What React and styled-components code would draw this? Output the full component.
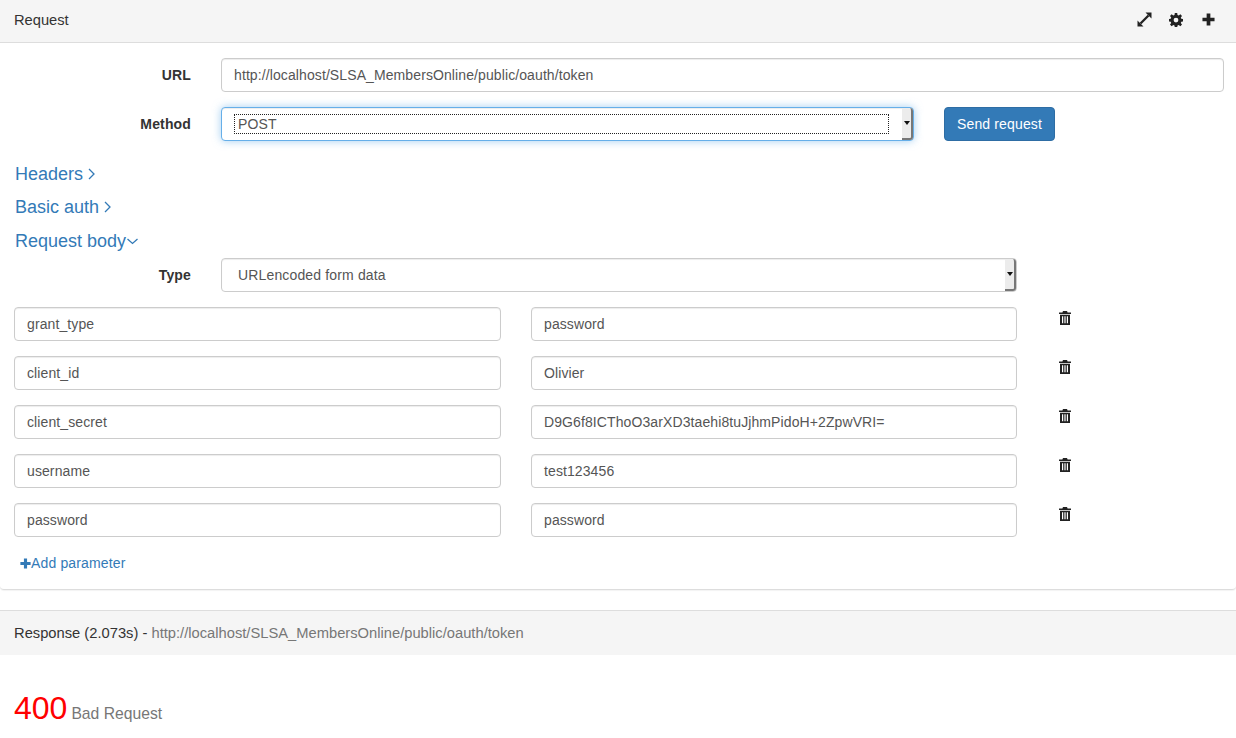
import React from 'react';
import styled, { createGlobalStyle } from 'styled-components';

const Global = createGlobalStyle`
  html, body { margin: 0; padding: 0; background: #fff; }
  body { font-family: "Liberation Sans", Arial, sans-serif; font-size: 14px; line-height: 20px; color: #333; }
  * { box-sizing: border-box; }
`;

const Page = styled.div`
  width: 1236px;
  height: 738px;
  overflow: hidden;
`;
const PanelHeader = styled.header`
  height: 43px;
  background: #f5f5f5;
  border-bottom: 1px solid #ddd;
  display: flex;
  align-items: center;
  justify-content: space-between;
  padding: 0 21px 2px 14px;
  color: #333;
  font-size: 14.7px;
`;
const Tools = styled.div`
  display: flex;
  align-items: center;
  gap: 17px;
  margin-bottom: 1px;
  color: #222;
`;
const Icon = styled.svg`
  display: block;
  width: ${p => p.$size || 14}px;
  height: ${p => p.$size || 14}px;
  margin-left: ${p => p.$ml || 0}px;
  fill: currentColor;
`;
const RequestPanel = styled.section`
  height: 547px;
  padding: 15px 12px 0 14px;
  border-bottom: 1px solid #ddd;
  border-radius: 0 0 4px 4px;
  box-shadow: 0 1px 1px rgba(0,0,0,.05);
`;
const FormRow = styled.div`
  display: flex;
  align-items: center;
  height: 34px;
  margin-bottom: ${p => p.$mb || 15}px;
`;
const Label = styled.label`
  width: 177px;
  margin-right: 30px;
  text-align: right;
  font-weight: 700;
  letter-spacing: .15px;
  color: #333;
`;
const Field = styled.div`
  flex: 1;
  height: 34px;
  padding: 6px 12px;
  border: 1px solid #ccc;
  border-radius: 4px;
  background: #fff;
  color: #555;
  letter-spacing: .1px;
  box-shadow: inset 0 1px 1px rgba(0,0,0,.075);
  white-space: nowrap;
  overflow: hidden;
`;
const SelectBox = styled.div`
  flex: 0 0 ${p => p.$w}px;
  height: 34px;
  display: flex;
  align-items: center;
  justify-content: space-between;
  border: 1px solid ${p => p.$focus ? '#66afe9' : '#ccc'};
  border-radius: 4px;
  background: #fff;
  color: #555;
  padding-left: ${p => p.$focus ? 12 : 16}px;
  letter-spacing: .15px;
  box-shadow: ${p => p.$focus
    ? 'inset 0 1px 1px rgba(0,0,0,.075), 0 0 8px rgba(102,175,233,.6)'
    : 'inset 0 1px 1px rgba(0,0,0,.075)'};
`;
const SelectValue = styled.div`
  flex: 1;
  height: 20px;
  line-height: 20px;
  padding-left: ${p => p.$focus ? 4 : 0}px;
  outline: ${p => p.$focus ? '1px dotted #222' : 'none'};
  outline-offset: -1px;
  margin-right: ${p => p.$focus ? 13 : 0}px;
`;
const SelectArrow = styled.div`
  flex: 0 0 11px;
  height: 32px;
  display: flex;
  align-items: center;
  justify-content: center;
  background: #ececec;
  border-right: 2px solid #777;
  border-bottom: 2px solid #777;
  border-radius: 0 3px 3px 0;
  &::after {
    content: "";
    border-left: 3px solid transparent;
    border-right: 3px solid transparent;
    border-top: 4px solid #111;
  }
`;
const SendButton = styled.button`
  margin-left: 30px;
  height: 34px;
  width: 111px;
  padding: 0;
  font: inherit;
  letter-spacing: .15px;
  color: #fff;
  background: #337ab7;
  border: 1px solid #2e6da4;
  border-radius: 4px;
`;
const SectionLink = styled.a`
  display: flex;
  align-items: center;
  gap: ${p => p.$gap ?? 5}px;
  margin-left: 1px;
  height: 20px;
  margin-bottom: ${p => p.$mb}px;
  font-size: 18px;
  color: #337ab7;
`;
const Params = styled.div`
  display: flex;
  flex-direction: column;
  gap: 15px;
  margin-top: 15px;
`;
const ParamRow = styled.div`
  display: flex;
  align-items: flex-start;
  height: 34px;
`;
const ParamName = styled(Field)`
  flex: 0 0 487px;
  margin-right: 30px;
`;
const ParamValue = styled(Field)`
  flex: 0 0 486px;
  margin-right: 41px;
`;
const TrashButton = styled.span`
  display: block;
  margin-top: 4px;
  color: #222;
`;
const AddParam = styled.a`
  display: flex;
  align-items: center;
  margin: 16px 0 0 6px;
  letter-spacing: .15px;
  color: #337ab7;
`;
const ResponseHeader = styled.header`
  margin-top: 20px;
  height: 45px;
  display: flex;
  align-items: center;
  padding: 0 14px;
  background: #f5f5f5;
  border-top: 1px solid #ddd;
  color: #333;
  font-size: 14.73px;
  white-space: pre;
`;
const Muted = styled.span`
  color: #777;
`;
const Status = styled.div`
  display: flex;
  align-items: baseline;
  padding: 33px 14px 0;
  gap: 4px;
  line-height: 40px;
`;
const StatusCode = styled.span`
  font-size: 32px;
  color: #f00;
`;
const StatusText = styled.span`
  font-size: 15.7px;
  color: #777;
`;

const ResizeIcon = () => (
  <Icon viewBox="0 0 15 15" $size={15}>
    <path d="M8.500 .5h6v6zM.5 8.500v6h6z" />
    <path d="M3.500 11.500 11.500 3.500" stroke="currentColor" strokeWidth="2.300" fill="none" />
  </Icon>
);
const CogIcon = () => (
  <Icon viewBox="0 0 14 14" $size={14}>
    <path fillRule="evenodd" d="M5.800 0h2.400l.3 2 1.200.5 1.700-1.200 1.600 1.700-1.200 1.600.5 1.200 1.900.3v2.400l-1.900.3-.5 1.200 1.200 1.600-1.600 1.700-1.700-1.200-1.200.5-.3 1.900H5.800l-.3-1.900-1.200-.5-1.700 1.200L1 11.600l1.200-1.600-.5-1.200L-.2 8.500V6.100l1.900-.3.5-1.200L1 3l1.600-1.700 1.700 1.200 1.200-.5zM7 4.700a2.400 2.400 0 1 0 0 4.800 2.400 2.400 0 0 0 0-4.800z" />
  </Icon>
);
const PlusIcon = ({ size = 13, ml }) => (
  <Icon viewBox="0 0 14 14" $size={size} $ml={ml}>
    <path d="M5 .5h4V5h4.500v4H9v4.500H5V9H.5V5H5z" />
  </Icon>
);
const TrashIcon = () => (
  <Icon viewBox="0 0 14 14" $size={14}>
    <path fillRule="evenodd" d="M5 0h4l.6 1.500H13V3H1V1.500h3.400zM2 3.800h10V14H2zM4 5.300v7h1.200v-7zm2.400 0v7h1.200v-7zm2.400 0v7H10v-7z" />
  </Icon>
);
const Chevron = ({ down }) => (
  <svg width={down ? 11 : 7} height="12" viewBox={down ? '0 0 11 12' : '0 0 7 12'} style={{ display: 'block' }} fill="none" stroke="currentColor" strokeWidth="1.300">
    <path d={down ? 'M.5 4 5.500 8.500 10.500 4' : 'M1 1l5 5-5 5'} />
  </svg>
);

const params = [
  ['grant_type', 'password'],
  ['client_id', 'Olivier'],
  ['client_secret', 'D9G6f8ICThoO3arXD3taehi8tuJjhmPidoH+2ZpwVRI='],
  ['username', 'test123456'],
  ['password', 'password'],
];

export default function App() {
  return (
    <Page>
      <Global />
      <PanelHeader>
        <span>Request</span>
        <Tools>
          <ResizeIcon />
          <CogIcon />
          <PlusIcon ml={2} />
        </Tools>
      </PanelHeader>
      <RequestPanel>
        <FormRow>
          <Label>URL</Label>
          <Field>http://localhost/SLSA_MembersOnline/public/oauth/token</Field>
        </FormRow>
        <FormRow $mb={23}>
          <Label>Method</Label>
          <SelectBox $w={693} $focus>
            <SelectValue $focus>POST</SelectValue>
            <SelectArrow />
          </SelectBox>
          <SendButton>Send request</SendButton>
        </FormRow>
        <SectionLink $mb={13}>Headers <Chevron /></SectionLink>
        <SectionLink $mb={14}>Basic auth <Chevron /></SectionLink>
        <SectionLink $mb={7} $gap={1}>Request body<Chevron down /></SectionLink>
        <FormRow $mb={0}>
          <Label>Type</Label>
          <SelectBox $w={796}>
            <SelectValue>URLencoded form data</SelectValue>
            <SelectArrow />
          </SelectBox>
        </FormRow>
        <Params>
          {params.map(([k, v], i) => (
            <ParamRow key={i}>
              <ParamName>{k}</ParamName>
              <ParamValue>{v}</ParamValue>
              <TrashButton><TrashIcon /></TrashButton>
            </ParamRow>
          ))}
        </Params>
        <AddParam><PlusIcon size={11} />Add parameter</AddParam>
      </RequestPanel>
      <ResponseHeader>
        Response (2.073s) - <Muted>http://localhost/SLSA_MembersOnline/public/oauth/token</Muted>
      </ResponseHeader>
      <Status>
        <StatusCode>400</StatusCode>
        <StatusText>Bad Request</StatusText>
      </Status>
    </Page>
  );
}
